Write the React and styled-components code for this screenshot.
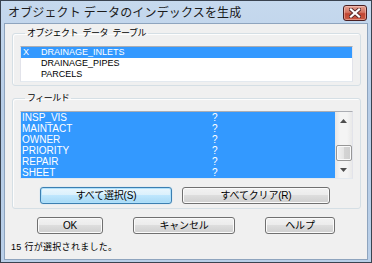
import React from "react";
import styled, { createGlobalStyle } from "styled-components";

const GlobalStyle = createGlobalStyle`
  html, body {
    margin: 0;
    padding: 0;
    background: #fff;
  }
  body {
    width: 372px;
    height: 263px;
    overflow: hidden;
  }
`;

const uiFont = `"Liberation Sans", "Noto Sans CJK JP", sans-serif`;

const Window = styled.div`
  box-sizing: border-box;
  width: 372px;
  height: 263px;
  border: 1px solid #3a4350;
  background: linear-gradient(#c6d9ee, #b7cde7 40%, #b9cfe8);
  display: flex;
  flex-direction: column;
  padding: 0 3px 2px 3px;
  font-family: ${uiFont};
  color: #000;
`;

const TitleBar = styled.div`
  height: 22px;
  display: flex;
  align-items: flex-start;
  justify-content: space-between;
  padding: 0 1px 0 4px;
`;

const Title = styled.div`
  font-family: "Noto Sans CJK JP", sans-serif;
  font-size: 12px;
  line-height: 22px;
  color: #1b1b1b;
  letter-spacing: 0.15px;
`;

const CloseButton = styled.div`
  box-sizing: border-box;
  margin-top: 4px;
  width: 24px;
  height: 16px;
  border: 1px solid #4a1f22;
  border-radius: 3px;
  background: linear-gradient(#e3a092, #d47564 45%, #c14533 55%, #c85a44);
  box-shadow: inset 0 0 0 1px rgba(255, 220, 210, 0.45);
  display: flex;
  align-items: center;
  justify-content: center;
`;

const Content = styled.div`
  flex: 1;
  border: 1px solid #8ea4be;
  background: #f0f0f0;
  padding: 3px 6px 0 7px;
  display: flex;
  flex-direction: column;
`;

const Group = styled.fieldset`
  margin: ${({ $top }) => $top || 0}px 0 0 0;
  padding: 0 7px ${({ $bottom }) => $bottom}px 7px;
  border: 1px solid #d5dfe5;
  border-radius: 3px;
  box-shadow: inset 1px 1px 0 #fdfdfd;
  min-width: 0;
`;

const Legend = styled.legend`
  margin-left: 5px;
  padding: 0 2px;
  font-family: "Noto Sans CJK JP", sans-serif;
  font-size: 9px;
  line-height: 12px;
  letter-spacing: -0.5px;
  word-spacing: 3px;
  white-space: pre;
  height: 12px;
`;

const ListBox = styled.div`
  box-sizing: border-box;
  margin-top: 7px;
  height: ${({ $h }) => $h}px;
  background: #fff;
  border: 1px solid #e2e3ea;
  border-top-color: #abadb3;
  border-bottom-color: #e3e9ef;
  display: flex;
`;

const Rows = styled.div`
  flex: 1;
  display: flex;
  flex-direction: column;
`;

const Row = styled.div`
  display: grid;
  grid-template-columns: ${({ $cols }) => $cols};
  height: 11px;
  line-height: 11px;
  padding-left: ${({ $pad }) => $pad}px;
  font-size: ${({ $size }) => $size}px;
  background: ${({ $sel }) => ($sel ? "#3399ff" : "transparent")};
  color: ${({ $sel }) => ($sel ? "#fff" : "#000")};
  white-space: nowrap;
`;

const ScrollBar = styled.div`
  width: 17px;
  display: flex;
  flex-direction: column;
  background: linear-gradient(90deg, #e6e6e6, #f4f4f4 30%, #f4f4f4 70%, #e9e9e9);
`;

const Arrow = styled.div`
  height: 17px;
  display: flex;
  align-items: center;
  justify-content: center;
`;

const Track = styled.div`
  flex: 1;
  display: flex;
  flex-direction: column;
  justify-content: flex-end;
  align-items: center;
`;

const Thumb = styled.div`
  box-sizing: border-box;
  width: 16px;
  height: 16px;
  border: 1px solid #979797;
  border-radius: 2px;
  background: linear-gradient(90deg, #f2f2f2, #e4e4e4 50%, #d4d4d4 50%, #cfcfcf);
  box-shadow: inset 0 0 0 1px #fafafa;
`;

const ButtonRow = styled.div`
  display: flex;
  gap: ${({ $gap }) => $gap}px;
  margin-top: 8px;
  padding-left: ${({ $pad }) => $pad}px;
`;

const Button = styled.div`
  box-sizing: border-box;
  width: ${({ $w }) => $w}px;
  height: 17px;
  border: 1px solid ${({ $def }) => ($def ? "#3c7fb1" : "#707070")};
  border-radius: 3px;
  background: ${({ $def }) =>
    $def
      ? "linear-gradient(#eaf6fd, #d9f0fc 50%, #bee6fd 50%, #a7d9f5)"
      : "linear-gradient(#f2f2f2, #ebebeb 50%, #dddddd 50%, #cfcfcf)"};
  box-shadow: ${({ $def }) =>
    $def ? "inset 0 0 0 1px #aee0fb, 0 0 1px #7ec4ee" : "inset 0 0 0 1px #fbfbfb"};
  display: flex;
  align-items: center;
  justify-content: center;
  font-size: 10px;
  line-height: 15px;
  letter-spacing: -0.2px;
  color: #000;
`;

const Status = styled.div`
  margin-top: 7px;
  margin-left: -1px;
  font-size: 9px;
  line-height: 12px;
  letter-spacing: 0.3px;
`;

const tables = [
  { mark: "X", name: "DRAINAGE_INLETS", sel: true },
  { mark: "", name: "DRAINAGE_PIPES" },
  { mark: "", name: "PARCELS" },
];

const fields = ["INSP_VIS", "MAINTACT", "OWNER", "PRIORITY", "REPAIR", "SHEET"];

const CloseX = () => (
  <svg width="12" height="10" viewBox="0 0 12 10">
    <path d="M2 1.5 L10 8.5 M10 1.5 L2 8.5" stroke="#5a2a2a" strokeWidth="4" strokeLinecap="square" />
    <path d="M2 1.5 L10 8.5 M10 1.5 L2 8.5" stroke="#fff" strokeWidth="2.2" strokeLinecap="square" />
  </svg>
);

const Tri = ({ down }) => (
  <svg width="7" height="4" viewBox="0 0 7 4">
    <polygon points={down ? "0,0 7,0 3.5,4" : "0,4 7,4 3.5,0"} fill="#4e4e4e" />
  </svg>
);

export default function App() {
  return (
    <>
      <GlobalStyle />
      <Window>
        <TitleBar>
          <Title>オブジェクト データのインデックスを生成</Title>
          <CloseButton>
            <CloseX />
          </CloseButton>
        </TitleBar>
        <Content>
          <Group $bottom={3}>
            <Legend>オブジェクト データ テーブル</Legend>
            <ListBox $h={36}>
              <Rows>
                {tables.map((t) => (
                  <Row key={t.name} $cols="18px 1fr" $pad={2} $size={9} $sel={t.sel}>
                    <span>{t.mark}</span>
                    <span>{t.name}</span>
                  </Row>
                ))}
              </Rows>
            </ListBox>
          </Group>
          <Group $top={6} $bottom={4}>
            <Legend>フィールド</Legend>
            <ListBox $h={68}>
              <Rows>
                {fields.map((f) => (
                  <Row key={f} $cols="190px 1fr" $pad={1} $size={10} $sel>
                    <span>{f}</span>
                    <span>?</span>
                  </Row>
                ))}
              </Rows>
              <ScrollBar>
                <Arrow>
                  <Tri />
                </Arrow>
                <Track>
                  <Thumb />
                </Track>
                <Arrow>
                  <Tri down />
                </Arrow>
              </ScrollBar>
            </ListBox>
            <ButtonRow $gap={10} $pad={20}>
              <Button $w={132} $def>すべて選択(S)</Button>
              <Button $w={148}>すべてクリア(R)</Button>
            </ButtonRow>
          </Group>
          <ButtonRow $gap={30} $pad={25}>
            <Button $w={66}>OK</Button>
            <Button $w={102}>キャンセル</Button>
            <Button $w={70}>ヘルプ</Button>
          </ButtonRow>
          <Status>15 行が選択されました。</Status>
        </Content>
      </Window>
    </>
  );
}
